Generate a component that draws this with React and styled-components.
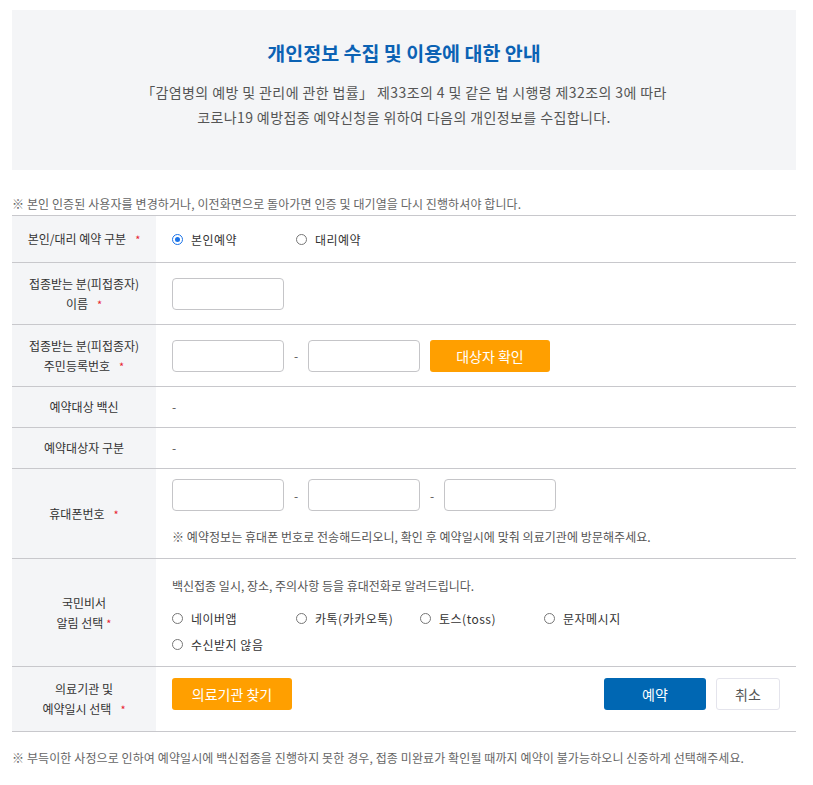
import styled, { createGlobalStyle } from "styled-components";

const GlobalStyle = createGlobalStyle`
  html, body {
    margin: 0;
    padding: 0;
    background: #fff;
  }
  body {
    font-family: "Noto Sans CJK KR", "Noto Sans", sans-serif;
    color: #333;
  }
`;

const RADIO_ROW1 = [
  { label: "본인예약", checked: true },
  { label: "대리예약", checked: false },
];

const NOTIFY = ["네이버앱", "카톡(카카오톡)", "토스(toss)", "문자메시지", "수신받지 않음"];

const Radio = ({ label, checked }) => (
  <RadioItem>
    <RadioCircle $checked={checked} />
    <span>{label}</span>
  </RadioItem>
);

const App = () => {
  return (
    <Page>
      <GlobalStyle />

      <Banner>
        <BannerTitle>개인정보 수집 및 이용에 대한 안내</BannerTitle>
        <BannerText>
          「감염병의 예방 및 관리에 관한 법률」 제33조의 4 및 같은 법 시행령 제32조의 3에 따라
          <br />
          코로나19 예방접종 예약신청을 위하여 다음의 개인정보를 수집합니다.
        </BannerText>
      </Banner>

      <Notice>※ 본인 인증된 사용자를 변경하거나, 이전화면으로 돌아가면 인증 및 대기열을 다시 진행하셔야 합니다.</Notice>

      <Table>
        <Row $h={47}>
          <Label>
            <span>
              본인/대리 예약 구분<Star>*</Star>
            </span>
          </Label>
          <Cell $center>
            <RadioGroup>
              {RADIO_ROW1.map((r) => (
                <Radio key={r.label} label={r.label} checked={r.checked} />
              ))}
            </RadioGroup>
          </Cell>
        </Row>

        <Row $h={62}>
          <Label>
            <span>
              접종받는 분(피접종자)
              <br />
              이름<Star>*</Star>
            </span>
          </Label>
          <Cell $center>
            <Input />
          </Cell>
        </Row>

        <Row $h={62}>
          <Label>
            <span>
              접종받는 분(피접종자)
              <br />
              주민등록번호<Star>*</Star>
            </span>
          </Label>
          <Cell $center>
            <InputLine>
              <Input />
              <Dash>-</Dash>
              <Input />
              <OrangeButton>대상자 확인</OrangeButton>
            </InputLine>
          </Cell>
        </Row>

        <Row $h={41}>
          <Label>
            <span>예약대상 백신</span>
          </Label>
          <Cell $center>
            <Plain>-</Plain>
          </Cell>
        </Row>

        <Row $h={41}>
          <Label>
            <span>예약대상자 구분</span>
          </Label>
          <Cell $center>
            <Plain>-</Plain>
          </Cell>
        </Row>

        <Row $h={90}>
          <Label>
            <span>
              휴대폰번호<Star>*</Star>
            </span>
          </Label>
          <Cell $pad="10px 16px 0">
            <InputLine>
              <Input />
              <Dash>-</Dash>
              <Input />
              <Dash>-</Dash>
              <Input />
            </InputLine>
            <CellNote>※ 예약정보는 휴대폰 번호로 전송해드리오니, 확인 후 예약일시에 맞춰 의료기관에 방문해주세요.</CellNote>
          </Cell>
        </Row>

        <Row $h={108}>
          <Label>
            <span>
              국민비서
              <br />
              알림 선택<Star $tight>*</Star>
            </span>
          </Label>
          <Cell $pad="17px 16px 0">
            <Plain>백신접종 일시, 장소, 주의사항 등을 휴대전화로 알려드립니다.</Plain>
            <NotifyGrid>
              {NOTIFY.map((n) => (
                <Radio key={n} label={n} checked={false} />
              ))}
            </NotifyGrid>
          </Cell>
        </Row>

        <Row $h={65}>
          <Label>
            <span>
              의료기관 및
              <br />
              예약일시 선택<Star>*</Star>
            </span>
          </Label>
          <Cell $pad="11px 16px 0">
            <ActionLine>
              <OrangeButton>의료기관 찾기</OrangeButton>
              <Actions>
                <BlueButton>예약</BlueButton>
                <GhostButton>취소</GhostButton>
              </Actions>
            </ActionLine>
          </Cell>
        </Row>
      </Table>

      <Footnote>※ 부득이한 사정으로 인하여 예약일시에 백신접종을 진행하지 못한 경우, 접종 미완료가 확인될 때까지 예약이 불가능하오니 신중하게 선택해주세요.</Footnote>
    </Page>
  );
};

const Page = styled.div`
  width: 784px;
  padding: 10px 12px 0;
  box-sizing: content-box;
`;

const Banner = styled.div`
  height: 160px;
  box-sizing: border-box;
  padding-top: 28px;
  background: #f4f5f7;
  text-align: center;
`;

const BannerTitle = styled.h2`
  margin: 0;
  font-size: 19.5px;
  font-weight: 700;
  line-height: 30px;
  color: #0b62b4;
`;

const BannerText = styled.p`
  margin: 12px 0 0;
  font-size: 14px;
  line-height: 25px;
  color: #555;
  letter-spacing: 0.4px;
`;

const Notice = styled.p`
  margin: 0;
  padding-top: 26px;
  height: 19px;
  font-size: 12px;
  line-height: 16px;
  color: #666;
  letter-spacing: 0.1px;
`;

const Table = styled.div`
  border-top: 1px solid #c8c8cc;
`;

const Row = styled.div`
  display: grid;
  grid-template-columns: 144px 1fr;
  height: ${(p) => p.$h}px;
  box-sizing: border-box;
  border-bottom: 1px solid #c8c8cc;
`;

const Label = styled.div`
  display: flex;
  align-items: center;
  justify-content: center;
  background: #f4f5f7;
  text-align: center;
  font-size: 12px;
  line-height: 20px;
  color: #333;
`;

const Star = styled.span`
  margin-left: ${(p) => (p.$tight ? "3px" : "9px")};
  color: #e8232f;
  font-size: 11px;
`;

const Cell = styled.div`
  display: flex;
  flex-direction: column;
  justify-content: ${(p) => (p.$center ? "center" : "flex-start")};
  padding: ${(p) => p.$pad || "0 16px"};
`;

const RadioGroup = styled.div`
  display: flex;
`;

const RadioItem = styled.label`
  display: flex;
  align-items: center;
  width: 124px;
  height: 26px;
  font-size: 12px;
  color: #333;
  letter-spacing: 0.5px;
`;

const RadioCircle = styled.span`
  position: relative;
  width: 9px;
  height: 9px;
  margin-right: 8px;
  border-radius: 50%;
  border: 1px solid ${(p) => (p.$checked ? "#1a73e8" : "#777")};

  &::after {
    content: "";
    display: ${(p) => (p.$checked ? "block" : "none")};
    position: absolute;
    left: 2px;
    top: 2px;
    width: 5px;
    height: 5px;
    border-radius: 50%;
    background: #1a73e8;
  }
`;

const Input = styled.input`
  width: 112px;
  height: 32px;
  box-sizing: border-box;
  border: 1px solid #c5c5c8;
  border-radius: 4px;
  background: #fff;
  outline: none;
`;

const InputLine = styled.div`
  display: flex;
  align-items: center;
`;

const Dash = styled.span`
  width: 24px;
  text-align: center;
  font-size: 12px;
  color: #555;
`;

const OrangeButton = styled.button`
  width: 120px;
  height: 32px;
  margin-left: 10px;
  border: none;
  border-radius: 3px;
  background: #ff9f00;
  color: #fff;
  font-family: inherit;
  font-size: 14px;
  cursor: pointer;

  &:first-child {
    margin-left: 0;
  }
`;

const Plain = styled.span`
  font-size: 12px;
  color: #555;
  line-height: 20px;
`;

const CellNote = styled.p`
  margin: 16px 0 0;
  font-size: 12px;
  line-height: 20px;
  color: #555;
  letter-spacing: 0.05px;
`;

const NotifyGrid = styled.div`
  display: grid;
  grid-template-columns: repeat(4, 124px);
  margin-top: 9px;
`;

const ActionLine = styled.div`
  display: flex;
  justify-content: space-between;
  align-items: center;
`;

const Actions = styled.div`
  display: flex;
  gap: 10px;
`;

const BlueButton = styled.button`
  width: 102px;
  height: 32px;
  border: none;
  border-radius: 3px;
  background: #0067b3;
  color: #fff;
  font-family: inherit;
  font-size: 14px;
`;

const GhostButton = styled.button`
  width: 64px;
  height: 32px;
  border: 1px solid #e4e4ec;
  border-radius: 3px;
  background: #fff;
  color: #555;
  font-family: inherit;
  font-size: 14px;
`;

const Footnote = styled.p`
  margin: 0;
  padding-top: 18px;
  font-size: 12px;
  line-height: 16px;
  color: #666;
  letter-spacing: 0.1px;
`;

export default App;
